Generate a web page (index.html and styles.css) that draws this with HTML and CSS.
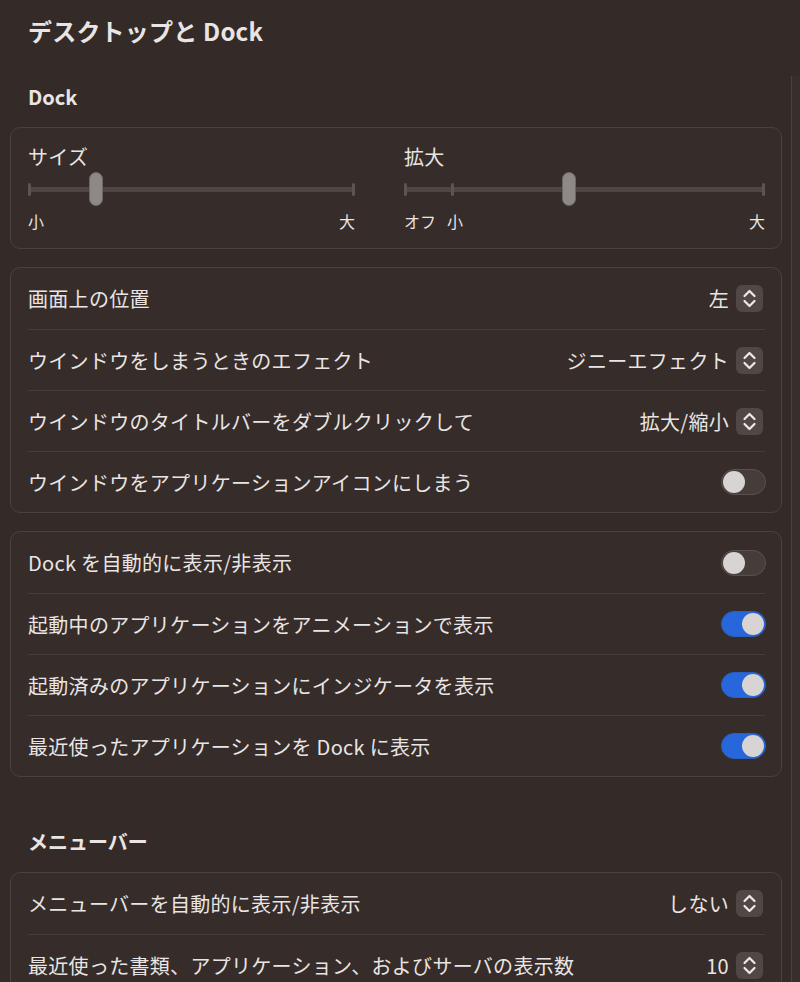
FILE: index.html
```html
<!DOCTYPE html>
<html lang="ja">
<head>
  <meta charset="UTF-8">
  <meta name="viewport" content="width=device-width, initial-scale=1.0">
  <title>デスクトップと Dock</title>
  <link rel="stylesheet" href="styles.css">
</head>
<body>
  <div class="window">
    <div class="titlebar">
      <h1>デスクトップと Dock</h1>
    </div>
    <div class="body-wrap">
      <div class="main">
        <h2 class="section-title">Dock</h2>
        <div class="card sliders">
          <div class="slider-group">
            <div class="slider-label">サイズ</div>
            <div class="slider">
              <span class="tick tick-start"></span>
              <span class="tick tick-end"></span>
              <span class="knob" style="left: 61px"></span>
            </div>
            <div class="slider-marks">
              <span>小</span>
              <span>大</span>
            </div>
          </div>
          <div class="slider-group">
            <div class="slider-label">拡大</div>
            <div class="slider">
              <span class="tick tick-start"></span>
              <span class="tick" style="left: 47px"></span>
              <span class="tick tick-end"></span>
              <span class="knob" style="left: 158px"></span>
            </div>
            <div class="slider-marks">
              <span>オフ</span>
              <span class="mark-small">小</span>
              <span class="mark-right">大</span>
            </div>
          </div>
        </div>

        <div class="card">
          <div class="row">
            <span class="row-label">画面上の位置</span>
            <div class="popup">
              <span>左</span>
              <svg class="stepper" viewBox="0 0 27 27"><rect width="27" height="27" rx="6"/><path d="M8.5 11 L13.5 6 L18.5 11 M8.5 16 L13.5 21 L18.5 16"/></svg>
            </div>
          </div>
          <div class="row">
            <span class="row-label">ウインドウをしまうときのエフェクト</span>
            <div class="popup">
              <span>ジニーエフェクト</span>
              <svg class="stepper" viewBox="0 0 27 27"><rect width="27" height="27" rx="6"/><path d="M8.5 11 L13.5 6 L18.5 11 M8.5 16 L13.5 21 L18.5 16"/></svg>
            </div>
          </div>
          <div class="row">
            <span class="row-label">ウインドウのタイトルバーをダブルクリックして</span>
            <div class="popup">
              <span>拡大/縮小</span>
              <svg class="stepper" viewBox="0 0 27 27"><rect width="27" height="27" rx="6"/><path d="M8.5 11 L13.5 6 L18.5 11 M8.5 16 L13.5 21 L18.5 16"/></svg>
            </div>
          </div>
          <div class="row">
            <span class="row-label">ウインドウをアプリケーションアイコンにしまう</span>
            <span class="toggle"></span>
          </div>
        </div>

        <div class="card">
          <div class="row">
            <span class="row-label">Dock を自動的に表示/非表示</span>
            <span class="toggle"></span>
          </div>
          <div class="row">
            <span class="row-label">起動中のアプリケーションをアニメーションで表示</span>
            <span class="toggle on"></span>
          </div>
          <div class="row">
            <span class="row-label">起動済みのアプリケーションにインジケータを表示</span>
            <span class="toggle on"></span>
          </div>
          <div class="row">
            <span class="row-label">最近使ったアプリケーションを Dock に表示</span>
            <span class="toggle on"></span>
          </div>
        </div>

        <h2 class="section-title second">メニューバー</h2>
        <div class="card">
          <div class="row">
            <span class="row-label">メニューバーを自動的に表示/非表示</span>
            <div class="popup">
              <span>しない</span>
              <svg class="stepper" viewBox="0 0 27 27"><rect width="27" height="27" rx="6"/><path d="M8.5 11 L13.5 6 L18.5 11 M8.5 16 L13.5 21 L18.5 16"/></svg>
            </div>
          </div>
          <div class="row">
            <span class="row-label">最近使った書類、アプリケーション、およびサーバの表示数</span>
            <div class="popup">
              <span>10</span>
              <svg class="stepper" viewBox="0 0 27 27"><rect width="27" height="27" rx="6"/><path d="M8.5 11 L13.5 6 L18.5 11 M8.5 16 L13.5 21 L18.5 16"/></svg>
            </div>
          </div>
        </div>
      </div>
      <div class="scrollbar"></div>
    </div>
  </div>
</body>
</html>
```

FILE: styles.css
```css
*,*::before,*::after{
  margin: 0;
  padding: 0;
  box-sizing: border-box;
}
body{
  width: 800px;
  height: 982px;
  overflow: hidden;
  background: #342a27;
  color: #e8e5e4;
  font-family: "Noto Sans CJK JP", "Noto Sans", sans-serif;
}

.window{
  height: 982px;
  display: flex;
  flex-direction: column;
}
.titlebar{
  height: 76px;
  flex-shrink: 0;
  padding: 13px 0 0 28px;
}
.titlebar h1{
  font-size: 24px;
  font-weight: 700;
  line-height: 36px;
  letter-spacing: 0.2px;
}
.body-wrap{
  flex: 1;
  display: flex;
  overflow: hidden;
}
.main{
  flex: 1;
  padding: 0 9px 0 10px;
  display: flex;
  flex-direction: column;
  gap: 18px;
}
.scrollbar{
  width: 9px;
  background: #382e2b;
  border-left: 1px solid #4a403d;
}

.section-title{
  font-size: 20px;
  font-weight: 700;
  line-height: 26px;
  padding: 8px 0 0 18px;
  margin-bottom: -1px;
}
.section-title.second{
  margin-top: 26px;
}

.card{
  border: 1px solid #4b4240;
  border-radius: 10px;
  background: #362c29;
  padding: 0 16px 0 17px;
  flex-shrink: 0;
}

/* sliders */
.sliders{
  display: grid;
  grid-template-columns: 327px 361px;
  column-gap: 49px;
  padding-top: 17px;
  padding-bottom: 16px;
}
.slider-label{
  font-size: 20px;
  line-height: 24px;
  letter-spacing: 0.3px;
}
.slider{
  position: relative;
  height: 34px;
  margin-top: 3px;
}
.slider::before{
  content: "";
  position: absolute;
  left: 0;
  right: 0;
  top: 15px;
  height: 5px;
  border-radius: 2px;
  background: #4f4644;
}
.tick{
  position: absolute;
  top: 11px;
  width: 3px;
  height: 13px;
  border-radius: 2px;
  background: #5e5553;
}
.tick-start{ left: 0; }
.tick-end{ right: 0; }
.knob{
  position: absolute;
  top: 0;
  width: 14px;
  height: 34px;
  border-radius: 7px;
  background: #8e8987;
  border: 1px solid #6e6765;
}
.slider-marks{
  position: relative;
  display: flex;
  justify-content: space-between;
  margin-top: 5px;
  font-size: 16px;
  line-height: 21px;
}
.mark-small{
  position: absolute;
  left: 43px;
}

/* rows */
.row{
  height: 61px;
  display: flex;
  align-items: center;
  justify-content: space-between;
  border-top: 1px solid #463d3a;
  font-size: 20px;
  letter-spacing: 0.3px;
}
.row:first-child{
  border-top: none;
}
.popup{
  display: flex;
  align-items: center;
  gap: 7px;
  margin-right: 2px;
}
.stepper{
  width: 27px;
  height: 27px;
}
.stepper rect{
  fill: #514846;
}
.stepper path{
  fill: none;
  stroke: #ece9e8;
  stroke-width: 2.2;
  stroke-linecap: round;
  stroke-linejoin: round;
}

.toggle{
  position: relative;
  width: 45px;
  height: 26px;
  border-radius: 13px;
  background: #463d3b;
  border: 1px solid #5a514f;
  margin-right: -1px;
}
.toggle::after{
  content: "";
  position: absolute;
  top: 1px;
  left: 1px;
  width: 22px;
  height: 22px;
  border-radius: 50%;
  background: #d7d4d3;
}
.toggle.on{
  background: #2767db;
  border-color: #2a5fc0;
}
.toggle.on::after{
  left: auto;
  right: 1px;
}
```
